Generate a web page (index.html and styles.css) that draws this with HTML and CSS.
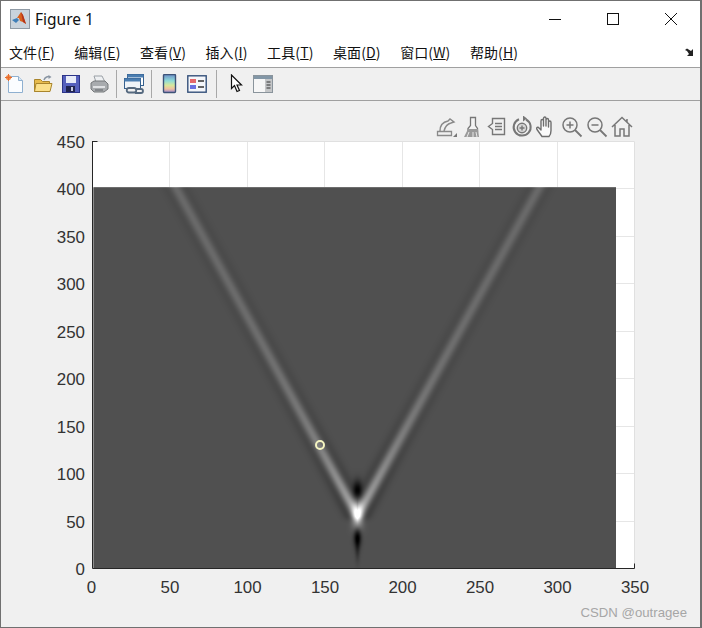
FILE: index.html
```html
<!DOCTYPE html>
<html lang="zh-CN">
<head>
  <meta charset="UTF-8" />
  <title>Figure 1</title>
  <link rel="stylesheet" href="styles.css">
</head>
<body>
  <div class="window">
    <!-- Title bar -->
    <div class="titlebar">
      <svg class="app-icon" width="20" height="20" viewBox="0 0 20 20">
        <rect x="0.5" y="0.5" width="19" height="19" fill="#c9d3dc" stroke="#8f9aa5"/>
        <path d="M2 11l5-2 2 2-3 3z" fill="#3f7fb8"/>
        <path d="M7 9l4-6 2 3 3 9-3-2-3-1-1-3z" fill="#d9601c"/>
        <path d="M11 3l2 3 3 9-3-2z" fill="#b5341a"/>
      </svg>
      <span class="title">Figure 1</span>
      <div class="win-btns">
        <svg width="12" height="12" viewBox="0 0 12 12"><path d="M0 6.5h12" stroke="#111"/></svg>
        <svg width="12" height="12" viewBox="0 0 12 12"><rect x="0.5" y="0.5" width="11" height="11" fill="none" stroke="#111"/></svg>
        <svg width="12" height="12" viewBox="0 0 12 12"><path d="M0 0l12 12M12 0L0 12" stroke="#111"/></svg>
      </div>
    </div>

    <!-- Menu -->
    <div class="menubar">
      <span class="menu-item">文件(<u>F</u>)</span>
      <span class="menu-item">编辑(<u>E</u>)</span>
      <span class="menu-item">查看(<u>V</u>)</span>
      <span class="menu-item">插入(<u>I</u>)</span>
      <span class="menu-item">工具(<u>T</u>)</span>
      <span class="menu-item">桌面(<u>D</u>)</span>
      <span class="menu-item">窗口(<u>W</u>)</span>
      <span class="menu-item">帮助(<u>H</u>)</span>
      <svg class="dock-arrow" width="11" height="9" viewBox="0 0 11 9">
        <path d="M0 2l2-1.500 4 2.500 2-2v7H2l2-2-2-3z" fill="#222"/>
      </svg>
    </div>

    <!-- Toolbar -->
    <div class="toolbar">
      <span class="tool"><svg width="20" height="20" viewBox="0 0 20 20">
        <path d="M3.5 2.5h10l4 4v12h-14z" fill="#fbfdff" stroke="#8fb0d0"/>
        <path d="M13.5 2.5v4h4" fill="#dbe7f3" stroke="#8fb0d0"/>
        <circle cx="3.5" cy="3.5" r="2.6" fill="#ef8a4a"/>
        <path d="M3.5 0v7M0 3.5h7" stroke="#e86a2c"/>
      </svg></span>
      <span class="tool"><svg width="20" height="20" viewBox="0 0 20 20">
        <path d="M1.5 5.500h6l2 2h7v10h-15z" fill="#e7bb4c" stroke="#a9852c"/>
        <path d="M1.5 17.5l1.500-8h16l-2 8z" fill="#fbe08a" stroke="#a9852c"/>
        <path d="M11 6c1-3 4-4 6-3" fill="none" stroke="#8a96a3" stroke-width="1.5"/>
        <path d="M15.5 1l3 2-3 2z" fill="#8a96a3"/>
      </svg></span>
      <span class="tool"><svg width="20" height="20" viewBox="0 0 20 20">
        <rect x="1.5" y="1.5" width="17" height="17" fill="#5560bc" stroke="#2c3488"/>
        <rect x="5" y="2" width="10" height="7" fill="#e8ecf8"/>
        <rect x="5" y="12" width="9" height="6" fill="#20244f"/>
        <rect x="10" y="13" width="2" height="4" fill="#c8cce0"/>
      </svg></span>
      <span class="tool"><svg width="20" height="20" viewBox="0 0 20 20">
        <path d="M5 2h8l3 6H7z" fill="#eef0f2" stroke="#9aa0a6"/>
        <path d="M2 9l3-2h11l3 3v5l-4 3H5l-3-3z" fill="#a8abae" stroke="#75787b"/>
        <path d="M4 13h12" stroke="#e0e2e4" stroke-width="2"/>
        <path d="M6 16h8" stroke="#5f6266"/>
      </svg></span>
      <span class="sep"></span>
      <span class="tool"><svg width="20" height="20" viewBox="0 0 20 20">
        <rect x="3.5" y="0.500" width="16" height="11" fill="#fff" stroke="#36618f"/>
        <rect x="3.5" y="0.500" width="16" height="3" fill="#4a7db0"/>
        <rect x="0.5" y="4.500" width="16" height="10" fill="#eef3f8" stroke="#36618f"/>
        <rect x="0.5" y="4.500" width="16" height="3" fill="#4a7db0"/>
        <path d="M5 14h5a2.200 2.200 0 0 1 0 4.500H5A2.200 2.200 0 0 1 5 14zM11 15h6a2 2 0 0 1 0 4h-6" fill="none" stroke="#55697f" stroke-width="1.800"/>
      </svg></span>
      <span class="sep"></span>
      <span class="tool"><svg width="20" height="20" viewBox="0 0 20 20">
        <defs>
          <linearGradient id="cbar" x1="0" y1="0" x2="0" y2="1">
            <stop offset="0" stop-color="#6d8fc8"/>
            <stop offset="0.35" stop-color="#8fdcd8"/>
            <stop offset="0.6" stop-color="#d8e89a"/>
            <stop offset="0.8" stop-color="#f0c0a0"/>
            <stop offset="1" stop-color="#9a86d0"/>
          </linearGradient>
        </defs>
        <rect x="4.5" y="0.5" width="12" height="18" rx="1" fill="url(#cbar)" stroke="#3d5378" stroke-width="1.4"/>
      </svg></span>
      <span class="tool"><svg width="20" height="20" viewBox="0 0 20 20">
        <rect x="0.8" y="1.8" width="18.4" height="16.4" fill="#f4f6fa" stroke="#34507a" stroke-width="1.4"/>
        <rect x="3" y="5" width="6" height="4" fill="#e4666a"/>
        <rect x="3" y="11" width="6" height="4" fill="#6a6fe0"/>
        <path d="M11 7h6M11 13h6" stroke="#333" stroke-width="1.4"/>
      </svg></span>
      <span class="sep sep-wide"></span>
      <span class="tool"><svg width="20" height="20" viewBox="0 0 20 20">
        <path d="M6.500 1v13.500l3-3 2.500 6 2.500-1-2.500-5.500h4.500z" fill="#fff" stroke="#111" stroke-width="1.200"/>
      </svg></span>
      <span class="tool"><svg width="20" height="20" viewBox="0 0 20 20">
        <rect x="0.500" y="1.500" width="19" height="17" fill="#f6f6f6" stroke="#8a949c"/>
        <rect x="1" y="2" width="18" height="3" fill="#8296a6"/>
        <rect x="12" y="5" width="7" height="13" fill="#c4c6c8"/>
        <path d="M13.500 8h4M13.500 11h4M13.500 14h4" stroke="#333"/>
      </svg></span>
    </div>

    <!-- Figure area -->
    <div class="figure">
      <svg class="axes" viewBox="1 101 700 526" width="700" height="526">
        <rect class="plot-bg" x="93" y="141" width="541.500" height="427"/>
        <path class="grid" d="M169.500 141v427M247.500 141v427M324.500 141v427M402.500 141v427M479.500 141v427M557.500 141v427"/>
        <path class="grid" d="M93 188.500h541M93 236.500h541M93 283.500h541M93 331.500h541M93 378.500h541M93 426.500h541M93 473.500h541M93 521.500h541"/>
        <path class="box" d="M93 141.500h541.500V568"/>
        <path class="axis" d="M92.500 141v427.500H634.500v-5M92.500 141.500h5M92.500 188.500h5"/>
        <g class="ytick">
          <text x="85" y="147.500">450</text>
          <text x="85" y="195">400</text>
          <text x="85" y="242.500">350</text>
          <text x="85" y="290">300</text>
          <text x="85" y="337.500">250</text>
          <text x="85" y="385">200</text>
          <text x="85" y="432.500">150</text>
          <text x="85" y="480">100</text>
          <text x="85" y="527.500">50</text>
          <text x="85" y="575">0</text>
        </g>
        <g class="xtick">
          <text x="91.500" y="593">0</text>
          <text x="170" y="593">50</text>
          <text x="247.500" y="593">100</text>
          <text x="325" y="593">150</text>
          <text x="402.500" y="593">200</text>
          <text x="480" y="593">250</text>
          <text x="557.500" y="593">300</text>
          <text x="635" y="593">350</text>
        </g>
      </svg>
      <canvas id="heat" class="heat" width="523" height="381"></canvas>
      <div class="marker"></div>

      <!-- Axes toolbar -->
      <div class="axes-tools">
        <svg width="22" height="22" viewBox="0 0 22 22">
          <path d="M1.500 15.500h14v4h-14z" fill="none" stroke="#8a8a8a" stroke-width="1.300"/>
          <path d="M4 15c0-5 3-9 8-10l2-2 4 3-3 1c-4 1-6 4-7 8" fill="none" stroke="#8a8a8a" stroke-width="1.400"/>
          <path d="M21 17v4h-4z" fill="#777"/>
        </svg>
        <svg width="22" height="22" viewBox="0 0 22 22">
          <path d="M9.500 1.500h5v8l2 3v3H7v-3l2.500-3z" fill="#f4f4f4" stroke="#777" stroke-width="1.300"/>
          <path d="M7 13h10l1 8H3z" fill="#9a9a9a"/>
          <path d="M8 16l-2 5M12 16v5M15 16l1 5" stroke="#e8e8e8"/>
        </svg>
        <svg width="22" height="22" viewBox="0 0 22 22">
          <path d="M6.500 2.500h12v16h-12v-5l-4-3 4-3z" fill="none" stroke="#777" stroke-width="1.400"/>
          <path d="M9 7.500h7M9 10.500h7M9 13.500h7" stroke="#777" stroke-width="1.400"/>
        </svg>
        <svg width="22" height="22" viewBox="0 0 22 22">
          <path d="M15 3.500a8.500 8.500 0 1 1-7-.3" fill="none" stroke="#777" stroke-width="2"/>
          <path d="M9 0l4 3-4 3z" fill="#777" transform="translate(3 -0.500)"/>
          <circle cx="11" cy="12" r="4.700" fill="#d8d8d8" stroke="#777" stroke-width="1.400"/>
          <path d="M11 9.500v5M8.500 12h5" stroke="#777" stroke-width="1.400"/>
        </svg>
        <svg width="22" height="22" viewBox="0 0 22 22">
          <path d="M6 20.500l-5-7c-1-2 1-3 2-1.500l2 2V5c0-2 2.500-2 2.500 0v5-7.500c0-2 2.500-2 2.500 0V10V4c0-2 2.500-2 2.500 0v7V6.500c0-2 2.500-2 2.500 0v8c0 3-1 5-2 6z" fill="#fafafa" stroke="#6e6e6e" stroke-width="1.400" stroke-linejoin="round"/>
        </svg>
        <svg width="22" height="22" viewBox="0 0 22 22">
          <circle cx="9" cy="9" r="7" fill="none" stroke="#777" stroke-width="1.500"/>
          <path d="M14 14l6.500 6.500" stroke="#777" stroke-width="1.800"/>
          <path d="M9 5.500v7M5.500 9h7" stroke="#777" stroke-width="1.500"/>
        </svg>
        <svg width="22" height="22" viewBox="0 0 22 22">
          <circle cx="9" cy="9" r="7" fill="none" stroke="#777" stroke-width="1.500"/>
          <path d="M14 14l6.500 6.500" stroke="#777" stroke-width="1.800"/>
          <path d="M5.500 9h7" stroke="#777" stroke-width="1.500"/>
        </svg>
        <svg width="22" height="22" viewBox="0 0 22 22">
          <path d="M1 11L11 1.500 21 11M4 9v11h5v-7h4v7h5V9M16 3v3" fill="none" stroke="#777" stroke-width="1.500"/>
        </svg>
      </div>

      <div class="watermark">CSDN @outragee</div>
    </div>
  </div>
  <script src="script.js"></script>
</body>
</html>
```

FILE: styles.css
```css
* { box-sizing: border-box; }
body {
  margin: 0;
  height: 100vh;
  overflow: hidden;
  background: #f0f0f0;
}
svg { display: block; }
.window {
  height: 100vh;
  display: flex;
  flex-direction: column;
  border: 1px solid #707070;
  border-right-width: 2px;
  font-family: "Noto Sans CJK SC", "Noto Sans", sans-serif;
  color: #111;
}

/* --- Title bar --- */
.titlebar {
  height: 38px;
  background: #fff;
  display: flex;
  align-items: center;
  padding-left: 9px;
  padding-bottom: 2px;
}
.app-icon { margin-right: 5px; }
.title {
  font-family: "Noto Sans", sans-serif;
  font-size: 15.5px;
}
.win-btns {
  margin-left: auto;
  display: flex;
  gap: 46px;
  padding-right: 23px;
}

/* --- Menu --- */
.menubar {
  height: 29px;
  background: #fff;
  border-bottom: 1px solid #a0a0a0;
  display: flex;
  align-items: center;
  gap: 19.5px;
  padding-left: 8px;
  padding-bottom: 2px;
  font-size: 14px;
  letter-spacing: .1px;
}
.menu-item { white-space: nowrap; }
.dock-arrow {
  margin-left: auto;
  margin-right: 4px;
  margin-top: 1px;
}

/* --- Toolbar --- */
.toolbar {
  height: 33px;
  background: #f0f0f0;
  border-bottom: 1px solid #a0a0a0;
  display: flex;
  align-items: center;
}
.tool {
  width: 28px;
  display: flex;
  justify-content: center;
}
.sep {
  width: 1px;
  height: 28px;
  margin: 0 3px;
  background: #a8a8a8;
}
.sep-wide { margin: 0 4px 0 5px; }

/* --- Figure --- */
.figure {
  flex: 1;
  position: relative;
  background: #f0f0f0;
}
.axes { font-family: "Liberation Sans", Arial, sans-serif; }
.plot-bg { fill: #fff; }
.grid { fill: none; stroke: #e6e6e6; }
.box { fill: none; stroke: #e0e0e0; }
.axis { fill: none; stroke: #262626; }
.ytick text, .xtick text {
  font-size: 16.9px;
  fill: #333;
}
.ytick text { text-anchor: end; }
.xtick text { text-anchor: middle; }
.heat {
  position: absolute;
  left: 92px;
  top: 86px;
}
.marker {
  position: absolute;
  left: 314px;
  top: 339px;
  width: 10px;
  height: 10px;
  border-radius: 50%;
  border: 2px solid #f5f5c0;
}
.axes-tools {
  position: absolute;
  top: 15px;
  left: 435px;
  display: flex;
  gap: 3px;
}
.watermark {
  position: absolute;
  right: 13px;
  bottom: 7px;
  font-family: "Liberation Sans", Arial, sans-serif;
  font-size: 13.2px;
  color: #a6a6a6;
}
```

FILE: script.js
```js
// V-shaped wave field, drawn pixel by pixel
const canvas = document.getElementById('heat');
const ctx = canvas.getContext('2d');
const w = canvas.width, h = canvas.height;
const img = ctx.createImageData(w, h);

const apexX = 264, apexY = 328, slope = 0.554;

function blob(x, y, cx, cy, sx, sy) {
  const dx = (x - cx) / sx, dy = (y - cy) / sy;
  return Math.exp(-dx * dx - dy * dy);
}

function wave(t) {
  return (1 - 1.2 * t * t) * Math.exp(-t * t);
}

for (let y = 0; y < h; y++) {
  for (let x = 0; x < w; x++) {
    let v = 80;
    const dist = apexY - y;
    const off = Math.abs(x - apexX) - dist * slope;
    const amp = 24 + 62 * Math.exp(-Math.max(dist, 0) / 70);
    const fade = dist < 0 ? Math.exp(-(dist * dist) / 40) : 1;
    v += amp * fade * wave(off / 8);

    v += 125 * blob(x, y, apexX, 327, 5.5, 15);
    v -= 78 * blob(x, y, apexX, 303, 4.5, 10);
    v -= 85 * blob(x, y, apexX, 349, 4, 10);
    v -= 28 * blob(x, y, apexX, 362, 2.5, 12);

    if (x === 0) v += 60;
    if (y === 0) v += 30;

    const i = (y * w + x) * 4;
    const c = Math.max(0, Math.min(255, v));
    img.data[i] = img.data[i + 1] = img.data[i + 2] = c;
    img.data[i + 3] = 255;
  }
}
ctx.putImageData(img, 0, 0);
```
